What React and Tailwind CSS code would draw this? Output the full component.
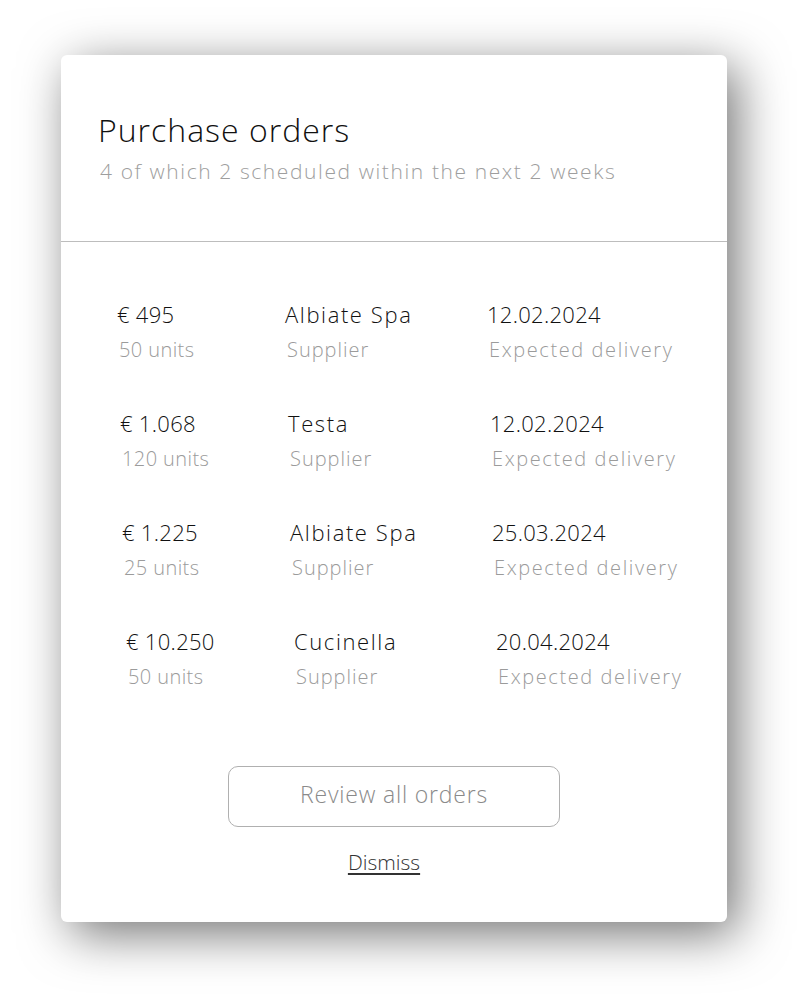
const orders = [
  { amount: '€ 495', units: '50 units', supplier: 'Albiate Spa', date: '12.02.2024', shift: 'pl-[56px]' },
  { amount: '€ 1.068', units: '120 units', supplier: 'Testa', date: '12.02.2024', shift: 'pl-[59px]' },
  { amount: '€ 1.225', units: '25 units', supplier: 'Albiate Spa', date: '25.03.2024', shift: 'pl-[61px]' },
  { amount: '€ 10.250', units: '50 units', supplier: 'Cucinella', date: '20.04.2024', shift: 'pl-[65px]' },
]

// tracking differs per cell: digits in the original face are narrow, letters wide
function Cell({ main, sub, mainTrack, subTrack }) {
  return (
    <div>
      <p className={`text-[22px] leading-[30px] text-[#111] ${mainTrack}`}>{main}</p>
      <p className={`mt-[7px] pl-[2px] text-[20px] leading-[28px] text-[#9b9b9b] ${subTrack}`}>{sub}</p>
    </div>
  )
}

export default function App() {
  return (
    <div className="min-h-screen bg-white pl-[61px] pt-[55px] font-['Open_Sans',sans-serif] font-light">
      <div className="flex h-[867px] w-[666px] flex-col rounded-md bg-white shadow-[10px_12px_50px_rgba(0,0,0,0.55)]">
        <div className="h-[187px] border-b border-[#bdbdbd] pl-[37px] pt-[56px]">
          <h1 className="text-[32px] leading-[38px] tracking-[1px] text-[#111]">Purchase orders</h1>
          <p className="mt-[8px] pl-[2px] text-[21px] leading-[28px] tracking-[1.6px] text-[#9e9e9e]">4 of which 2 scheduled within the next 2 weeks</p>
        </div>

        <div className="flex flex-col gap-[44px] pt-[57px]">
          {orders.map((o, i) => (
            <div key={i} className={`grid grid-cols-[168px_202px_1fr] ${o.shift}`}>
              <Cell main={o.amount} sub={o.units} mainTrack="tracking-[0.3px]" subTrack="tracking-[0.4px]" />
              <Cell main={o.supplier} sub="Supplier" mainTrack="tracking-[1.6px]" subTrack="tracking-[1px]" />
              <Cell main={o.date} sub="Expected delivery" mainTrack="tracking-[0.3px]" subTrack="tracking-[1.6px]" />
            </div>
          ))}
        </div>

        <div className="mt-[75px] flex justify-center">
          <button type="button" className="h-[61px] w-[332px] rounded-[10px] border border-[#b0b0b0] pb-[5px] text-[23px] tracking-[0.8px] text-[#8a8a8a]">
            Review all orders
          </button>
        </div>
        <div className="mt-[21px] flex justify-center pr-[20px]">
          <a href="#" className="text-[21px] leading-[28px] text-[#333] underline underline-offset-[3px]">Dismiss</a>
        </div>
      </div>
    </div>
  )
}
